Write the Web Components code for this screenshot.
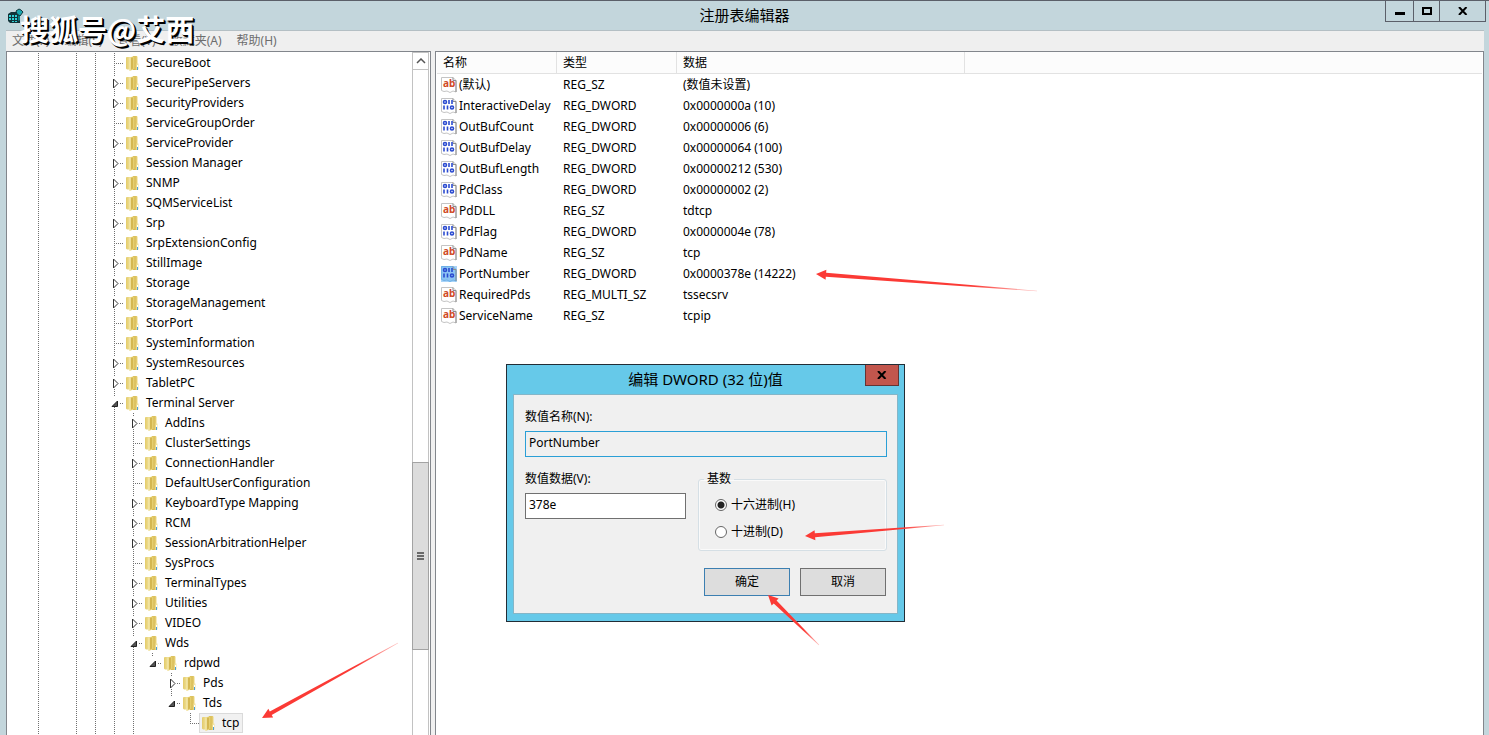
<!DOCTYPE html>
<html lang="zh-CN">
<head>
<meta charset="utf-8">
<title>注册表编辑器</title>
<style>
  html,
  body {
    height: 100%;
    margin: 0;
  }

  body {
    font: 12px/20px "Noto Sans", "Noto Sans CJK SC", sans-serif;
    color: #000;
    overflow: hidden;
  }
</style>
</head>
<body>
<registry-editor></registry-editor>

<script>
const ICONS = {
  app: /* html */`
    <svg width="17" height="17" viewBox="0 0 17 17">
      <path d="M0 6 3 4h9v11H2l-2-2z" fill="#12343a"/>
      <path d="M1 7h2v2H1zM4 7h2v2H4zM7 7h2v2H7zM1 10h2v2H1zM4 10h2v2H4zM7 10h2v2H7zM4 13h2v1H4zM7 13h2v1H7z" fill="#2fd3d8"/>
      <path d="M10 13V8l2-2v6z" fill="#0b7f88"/>
      <path d="m8 3 3-2 2 1 2 2-3 4-3-2z" fill="#1ba7b0" stroke="#12343a"/>
    </svg>`,
  folder: /* html */`
    <svg width="16" height="16" viewBox="0 0 16 16">
      <linearGradient id="back">
        <stop offset="0" stop-color="#e3cb69"/>
        <stop offset="1" stop-color="#f7ebaf"/>
      </linearGradient>
      <linearGradient id="flap">
        <stop offset="0" stop-color="#c9a83e"/>
        <stop offset="1" stop-color="#ecd67c"/>
      </linearGradient>
      <path d="M2 2.500 3 2h5v12.500H3l-1-1z" fill="url(#back)"/>
      <path d="M9 1h4l.5 1v13H9z" fill="url(#flap)"/>
      <path d="m5.500 2.500 5-1.500v13l-5 2z" fill="#e6cf70"/>
      <path d="m7 3 2-.5v11l-2 1z" fill="#d4b750"/>
      <path d="m5.500 2.500 1-.3v13.500l-1 .3z" fill="#f8efbd"/>
      <path d="M12.500 8.500h2v6h-2z" fill="#f1e3a0"/>
      <path d="M13 10h1v2h-1z" fill="#fff"/>
      <path d="M13 12h1v3h-1z" fill="#4a9fd8"/>
    </svg>`,
  sz: /* html */`
    <svg width="16" height="16" viewBox="0 0 16 16">
      <path d="M.5.5H12l3 3v11.500l-3-1-3 1.500-3-1.500-3 .5-2.500-1z" fill="#fff" stroke="#c4c4c4"/>
      <path d="M12 .5v3h3v11.500" fill="none" stroke="#8c8c8c"/>
      <text x="2" y="10" font-family="Noto Sans" font-size="10" font-weight="bold" fill="#d04a26">ab</text>
    </svg>`,
  dword: /* html */`
    <svg width="16" height="16" viewBox="0 0 16 16">
      <path class="sheet" d="M.5.5H12l3 3v11.500l-3-1-3 1.500-3-1.500-3 .5-2.500-1z" fill="#fff" stroke="#c4c4c4"/>
      <path d="M12 .5v3h3v11.500" fill="none" stroke="#8c8c8c"/>
      <g fill="none" stroke="#2b4bd0" stroke-width="1.600">
        <circle cx="4" cy="4" r="1.500"/>
        <path d="M8 2v4M11 2v4M3 7.500v4M6.500 7.500v4"/>
        <circle cx="11" cy="9.500" r="1.500"/>
      </g>
    </svg>`
};

class CaptionButtons extends HTMLElement {
  constructor() {
    super();
    this.attachShadow({ mode: "open" });
  }

  static get styles() {
    return /* css */`
      :host {
        display: flex;
        border: solid #5b5f69;
        border-width: 0 1px 1px;
      }

      button {
        display: grid;
        place-items: center;
        box-sizing: border-box;
        width: 28px;
        height: 20px;
        padding: 0;
        border: 0;
        border-right: 1px solid #5b5f69;
        background: none;
      }

      button:nth-of-type(2) {
        width: 26px;
      }

      button:last-child {
        width: 45px;
        border-right: 0;
      }
    `;
  }

  connectedCallback() {
    this.shadowRoot.innerHTML = /* html */`
    <style>${CaptionButtons.styles}</style>
    <button aria-label="最小化"><svg width="10" height="8"><path d="M0 5h10v3H0z"/></svg></button>
    <button aria-label="最大化"><svg width="10" height="8"><path d="M1 1h8v6H1z" fill="none" stroke="#000" stroke-width="2"/></svg></button>
    <button aria-label="关闭"><svg width="10" height="8"><path d="m1 0 7.500 8M8.500 0 1 8" stroke="#000" stroke-width="2"/></svg></button>`;
  }
}

customElements.define("caption-buttons", CaptionButtons);

class TitleBar extends HTMLElement {
  constructor() {
    super();
    this.attachShadow({ mode: "open" });
  }

  static get styles() {
    return /* css */`
      :host {
        display: grid;
        grid-template-columns: 1fr auto 1fr;
        align-items: start;
        height: 29px;
        padding: 0 3px;
        border-top: 1px solid #5b5f69;
      }

      svg {
        margin: 7px 0 0 5px;
      }

      h1 {
        margin: 0;
        font-size: 15px;
        font-weight: normal;
        line-height: 29px;
      }

      caption-buttons {
        justify-self: end;
      }
    `;
  }

  connectedCallback() {
    this.shadowRoot.innerHTML = /* html */`
    <style>${TitleBar.styles}</style>
    ${ICONS.app}
    <h1><slot></slot></h1>
    <caption-buttons></caption-buttons>`;
  }
}

customElements.define("title-bar", TitleBar);

class MenuBar extends HTMLElement {
  constructor() {
    super();
    this.attachShadow({ mode: "open" });
  }

  static get styles() {
    return /* css */`
      :host {
        display: flex;
        gap: 15px;
        height: 20px;
        padding-left: 6px;
        border-top: 1px solid #b4bfc4;
        background: #efefef;
      }

      button {
        padding: 0;
        border: 0;
        background: none;
        color: #6d6d6d;
        font: inherit;
      }
    `;
  }

  connectedCallback() {
    const items = ["文件(F)", "编辑(E)", "查看(V)", "收藏夹(A)", "帮助(H)"];
    this.shadowRoot.innerHTML = /* html */`
    <style>${MenuBar.styles}</style>
    ${items.map(item => `<button>${item}</button>`).join("")}`;
  }
}

customElements.define("menu-bar", MenuBar);

/*
  guides: one character per column left of the icon
  "|" line passing, "." empty, "-" leaf, "L" last leaf, "+" closed, "o" open, "e" open and last
*/
class RegistryKey extends HTMLElement {
  constructor() {
    super();
    this.attachShadow({ mode: "open" });
  }

  static get styles() {
    return /* css */`
      :host {
        display: flex;
        height: 20px;
        white-space: nowrap;
      }

      svg {
        flex: none;
      }

      .key {
        display: flex;
        align-items: center;
        gap: 6px;
        height: 18px;
        margin-left: -1px;
        padding-right: 3px;
        border: 1px solid transparent;
        line-height: 18px;
      }

      :host([selected]) .key {
        border-color: #dadada;
        background: #f1f1f1;
      }
    `;
  }

  static guide(type) {
    const lines = {
      "|": "M9.500 0v20",
      ".": "",
      "-": "M9.500 0v20M9 10.500h10",
      "L": "M9.500 0v10M9 10.500h10",
      "+": "M9.500 0v4M9.500 16v4M15 10.500h4",
      "o": "M9.500 0v4M9.500 14v6M15 10.500h4",
      "e": "M9.500 0v4M15 10.500h4"
    };
    const arrows = {
      "+": `<path d="M8.500 6v9l4.500-4.500z" fill="#fff" stroke="#333"/>`,
      "o": `<path d="M12.500 8v5.500H7z" fill="#555" stroke="#222"/>`,
      "e": `<path d="M12.500 8v5.500H7z" fill="#555" stroke="#222"/>`
    };
    return /* html */`
      <svg width="19" height="20" aria-hidden="true">
        <path d="${lines[type]}" stroke="#707070" stroke-dasharray="1 1"/>
        ${arrows[type] ?? ""}
      </svg>`;
  }

  connectedCallback() {
    const guides = [...this.getAttribute("guides")].map(RegistryKey.guide).join("");
    this.shadowRoot.innerHTML = /* html */`
    <style>${RegistryKey.styles}</style>
    ${guides}
    <div class="key">${ICONS.folder}<span><slot></slot></span></div>`;
  }
}

customElements.define("registry-key", RegistryKey);

class RegistryTree extends HTMLElement {
  constructor() {
    super();
    this.attachShadow({ mode: "open" });
  }

  static get styles() {
    return /* css */`
      :host {
        display: flex;
        overflow: hidden;
        border: 1px solid #82868c;
        border-bottom: 0;
        background: #fff;
      }

      .keys {
        flex: 1;
        overflow: hidden;
        padding: 1px 0 0 22px;
      }

      .scroll {
        display: grid;
        grid-template-rows: 17px 393fr 188fr 85fr;
        width: 15px;
        margin-right: 1px;
        border: solid #c2c2c2;
        border-width: 1px 1px 0;
      }

      .up {
        display: grid;
        place-items: center;
        padding: 0;
        border: 0;
        border-bottom: 1px solid #c2c2c2;
        background: #fff;
      }

      .thumb {
        display: grid;
        place-items: center;
        grid-row: 3;
        margin: 0 -1px;
        border: 1px solid #a3a3a3;
        background: #dcdcdc;
      }
    `;
  }

  connectedCallback() {
    const keys = [
      ["-", "SecureBoot"],
      ["+", "SecurePipeServers"],
      ["+", "SecurityProviders"],
      ["-", "ServiceGroupOrder"],
      ["+", "ServiceProvider"],
      ["+", "Session Manager"],
      ["+", "SNMP"],
      ["-", "SQMServiceList"],
      ["+", "Srp"],
      ["-", "SrpExtensionConfig"],
      ["+", "StillImage"],
      ["+", "Storage"],
      ["+", "StorageManagement"],
      ["-", "StorPort"],
      ["-", "SystemInformation"],
      ["+", "SystemResources"],
      ["+", "TabletPC"],
      ["o", "Terminal Server"],
      ["|+", "AddIns"],
      ["|-", "ClusterSettings"],
      ["|+", "ConnectionHandler"],
      ["|-", "DefaultUserConfiguration"],
      ["|+", "KeyboardType Mapping"],
      ["|+", "RCM"],
      ["|+", "SessionArbitrationHelper"],
      ["|-", "SysProcs"],
      ["|+", "TerminalTypes"],
      ["|+", "Utilities"],
      ["|+", "VIDEO"],
      ["|o", "Wds"],
      ["||e", "rdpwd"],
      ["||.+", "Pds"],
      ["||.e", "Tds"],
      ["||..L", "tcp"],
      ["|-", ""]
    ];
    this.shadowRoot.innerHTML = /* html */`
    <style>${RegistryTree.styles}</style>
    <div class="keys">
      ${keys.map(([guides, name]) => `<registry-key guides="|.||${guides}" ${name === "tcp" ? "selected" : ""}>${name}</registry-key>`).join("")}
    </div>
    <div class="scroll">
      <button class="up" aria-label="向上滚动"><svg width="10" height="6"><path d="m1 5 4-4 4 4" fill="none" stroke="#555" stroke-width="1.500"/></svg></button>
      <div class="thumb"><svg width="7" height="8"><path d="M0 1h7M0 4h7M0 7h7" stroke="#6a6a6a" stroke-width="2"/></svg></div>
    </div>`;
  }
}

customElements.define("registry-tree", RegistryTree);

class ValueList extends HTMLElement {
  constructor() {
    super();
    this.attachShadow({ mode: "open" });
  }

  static get styles() {
    return /* css */`
      :host {
        display: block;
        overflow: hidden;
        padding: 0 1px;
        border: 1px solid #82868c;
        border-bottom: 0;
        background: #fff;
      }

      table {
        width: 100%;
        table-layout: fixed;
        border-collapse: separate;
        border-spacing: 0;
      }

      .name,
      .type {
        width: 120px;
      }

      .data {
        width: 288px;
      }

      th {
        box-sizing: border-box;
        height: 22px;
        padding: 1px 0 0 6px;
        border: solid #e2e2e2;
        border-width: 0 1px 1px 0;
        background: #fcfcfc;
        font-weight: normal;
        line-height: 20px;
        text-align: left;
      }

      th:last-child {
        border-right: 0;
      }

      td {
        height: 21px;
        padding: 0 0 0 6px;
        line-height: 21px;
        white-space: nowrap;
      }

      td:first-child {
        padding-left: 4px;
      }

      .value {
        display: flex;
        align-items: center;
        gap: 2px;
      }

      .selected svg {
        background: #a9d4f8;
      }

      .selected .sheet {
        fill: #8cc4f4;
        stroke: #6eb0e6;
      }
    `;
  }

  connectedCallback() {
    const values = [
      ["(默认)", "REG_SZ", "(数值未设置)"],
      ["InteractiveDelay", "REG_DWORD", "0x0000000a (10)"],
      ["OutBufCount", "REG_DWORD", "0x00000006 (6)"],
      ["OutBufDelay", "REG_DWORD", "0x00000064 (100)"],
      ["OutBufLength", "REG_DWORD", "0x00000212 (530)"],
      ["PdClass", "REG_DWORD", "0x00000002 (2)"],
      ["PdDLL", "REG_SZ", "tdtcp"],
      ["PdFlag", "REG_DWORD", "0x0000004e (78)"],
      ["PdName", "REG_SZ", "tcp"],
      ["PortNumber", "REG_DWORD", "0x0000378e (14222)"],
      ["RequiredPds", "REG_MULTI_SZ", "tssecsrv"],
      ["ServiceName", "REG_SZ", "tcpip"]
    ];
    this.shadowRoot.innerHTML = /* html */`
    <style>${ValueList.styles}</style>
    <table>
      <colgroup><col class="name"><col class="type"><col class="data"><col></colgroup>
      <thead><tr><th>名称</th><th>类型</th><th>数据</th><th></th></tr></thead>
      <tbody>
        ${values.map(([name, type, data]) => /* html */`
        <tr class="${name === "PortNumber" ? "selected" : ""}">
          <td><div class="value">${type === "REG_DWORD" ? ICONS.dword : ICONS.sz}<span>${name}</span></div></td>
          <td>${type}</td>
          <td>${data}</td>
          <td></td>
        </tr>`).join("")}
      </tbody>
    </table>`;
  }
}

customElements.define("value-list", ValueList);

class EditDialog extends HTMLElement {
  constructor() {
    super();
    this.attachShadow({ mode: "open" });
  }

  static get styles() {
    return /* css */`
      :host {
        display: block;
        box-sizing: border-box;
        width: 399px;
        padding: 0 6px 7px;
        border: 1px solid #222d36;
        background: #66c9e9;
      }

      header {
        display: grid;
        grid-template-columns: 1fr auto 1fr;
        height: 29px;
      }

      h2 {
        grid-column: 2;
        margin: 0;
        font-size: 15px;
        font-weight: normal;
        line-height: 29px;
      }

      .close {
        display: grid;
        place-items: center;
        justify-self: end;
        box-sizing: border-box;
        width: 34px;
        height: 21px;
        margin-right: -1px;
        padding: 0;
        border: 1px solid #643434;
        border-top: 0;
        background: #c2564d;
      }

      form {
        display: grid;
        grid-template-columns: 161px 1fr;
        column-gap: 12px;
        padding: 12px 10px 17px 11px;
        border: 1px solid #84b6c8;
        background: #f0f0f0;
      }

      label {
        display: block;
      }

      .name {
        grid-column: 1 / -1;
      }

      .name,
      .data {
        height: 62px;
      }

      input[type="text"] {
        display: block;
        box-sizing: border-box;
        width: 100%;
        height: 26px;
        margin: 4px 0 0;
        padding: 0 3px 4px;
        border: 1px solid #707070;
        background: #fff;
        color: #000;
        font: inherit;
      }

      .name input[type="text"] {
        border-color: #2a9fd6;
        background: #f0f0f0;
      }

      fieldset {
        min-width: 0;
        height: 82px;
        box-sizing: border-box;
        margin: 0;
        padding: 2px 16px 0;
        border: 1px solid #d5dfe5;
        border-radius: 3px;
        box-shadow: inset 0 0 0 1px #fafafa;
      }

      legend {
        margin-left: -11px;
        padding: 0 3px;
      }

      fieldset label {
        display: flex;
        align-items: center;
        gap: 4px;
        height: 27px;
      }

      input[type="radio"] {
        appearance: none;
        box-sizing: border-box;
        width: 12px;
        height: 12px;
        margin: 0;
        border: 1px solid #666;
        border-radius: 50%;
        background: #fff;
      }

      input[type="radio"]:checked {
        background: radial-gradient(#222 3px, #fff 4px);
      }

      footer {
        grid-column: 1 / -1;
        display: flex;
        justify-content: end;
        gap: 10px;
        padding: 17px 1px 0;
      }

      footer button {
        width: 86px;
        height: 28px;
        padding: 0;
        border: 1px solid #707070;
        background: #ddd;
        color: #000;
        font: inherit;
      }

      footer .ok {
        border-color: #3c7fb1;
      }
    `;
  }

  connectedCallback() {
    this.shadowRoot.innerHTML = /* html */`
    <style>${EditDialog.styles}</style>
    <header>
      <h2><slot></slot></h2>
      <button class="close" aria-label="关闭"><svg width="10" height="8"><path d="m1 0 7.500 8M8.500 0 1 8" stroke="#000" stroke-width="2"/></svg></button>
    </header>
    <form>
      <div class="name">
        <label for="name">数值名称(N):</label>
        <input id="name" type="text" value="PortNumber" readonly>
      </div>
      <div class="data">
        <label for="data">数值数据(V):</label>
        <input id="data" type="text" value="378e">
      </div>
      <fieldset>
        <legend>基数</legend>
        <label><input type="radio" name="base" checked>十六进制(H)</label>
        <label><input type="radio" name="base">十进制(D)</label>
      </fieldset>
      <footer>
        <button class="ok" type="button">确定</button>
        <button type="button">取消</button>
      </footer>
    </form>`;
  }
}

customElements.define("edit-dialog", EditDialog);

class RedArrows extends HTMLElement {
  constructor() {
    super();
    this.attachShadow({ mode: "open" });
  }

  static get styles() {
    return /* css */`
      :host {
        display: block;
        pointer-events: none;
      }
    `;
  }

  // Thin at the tail, widening into the head
  static arrow([x1, y1, x2, y2], i) {
    const length = Math.hypot(x2 - x1, y2 - y1);
    const angle = Math.atan2(y2 - y1, x2 - x1) * 180 / Math.PI;
    return /* html */`
      <linearGradient id="fade${i}">
        <stop offset="0.7" stop-color="#fb3a35"/>
        <stop offset="1" stop-color="#fb3a35" stop-opacity="0.3"/>
      </linearGradient>
      <path transform="translate(${x1} ${y1}) rotate(${angle})"
        d="M0 0 10-5V-2L${length}-.3V.3L10 2V5z" fill="url(#fade${i})"/>`;
  }

  connectedCallback() {
    const arrows = [
      [816, 274, 1037, 291],
      [805, 536, 944, 525],
      [768, 595, 819, 645],
      [262, 718, 398, 643]
    ];
    this.shadowRoot.innerHTML = /* html */`
    <style>${RedArrows.styles}</style>
    <svg width="100%" height="100%" aria-hidden="true">${arrows.map(RedArrows.arrow).join("")}</svg>`;
  }
}

customElements.define("red-arrows", RedArrows);

class RegistryEditor extends HTMLElement {
  constructor() {
    super();
    this.attachShadow({ mode: "open" });
  }

  static get styles() {
    return /* css */`
      :host {
        display: flex;
        flex-direction: column;
        height: 100%;
        background: #c3d6dc;
        position: relative;
        overflow: hidden;
      }

      main {
        flex: 1;
        display: flex;
        flex-direction: column;
        min-height: 0;
        margin: 0 5px 0 6px;
      }

      .panes {
        flex: 1;
        display: grid;
        grid-template-columns: 425px 1fr;
        grid-template-rows: minmax(0, 1fr);
        gap: 4px;
        min-height: 0;
        background: #f0f0f0;
      }

      edit-dialog {
        position: absolute;
        left: 506px;
        top: 364px;
      }

      red-arrows {
        position: absolute;
        inset: 0;
      }

      .watermark {
        position: absolute;
        left: 20px;
        top: 8px;
        color: #fff;
        font: bold 29px/40px "Noto Sans CJK SC", sans-serif;
        text-shadow:
          1px 1px 0 #000,
          2px 2px 0 #000;
        white-space: nowrap;
      }
    `;
  }

  connectedCallback() {
    this.shadowRoot.innerHTML = /* html */`
    <style>${RegistryEditor.styles}</style>
    <title-bar>注册表编辑器</title-bar>
    <main>
      <menu-bar></menu-bar>
      <div class="panes">
        <registry-tree></registry-tree>
        <value-list></value-list>
      </div>
    </main>
    <edit-dialog>编辑 DWORD (32 位)值</edit-dialog>
    <red-arrows></red-arrows>
    <div class="watermark">搜狐号@艾西</div>`;
  }
}

customElements.define("registry-editor", RegistryEditor);
</script>
</body>
</html>
